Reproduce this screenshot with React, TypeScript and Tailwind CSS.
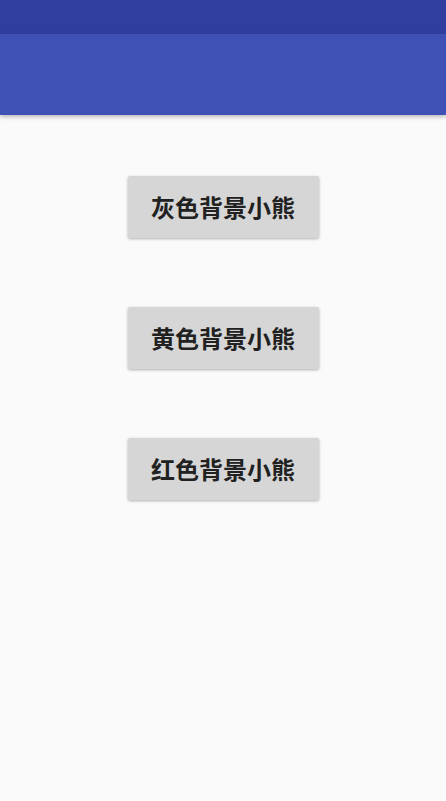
import React from "react";

const labels = ["灰色背景小熊", "黄色背景小熊", "红色背景小熊"];

export default function App() {
  return (
    <div
      className="w-[446px] h-[801px] bg-[#fafafa] flex flex-col overflow-hidden"
      style={{ fontFamily: '"Noto Sans CJK SC", Roboto, sans-serif' }}
    >
      <div className="h-[34px] bg-[#303f9f] shrink-0" />
      <div className="h-[81px] bg-[#3f51b5] shrink-0 shadow-[0_2px_4px_rgba(0,0,0,0.25)] relative z-10" />
      <div className="flex flex-col items-center pt-[61px] gap-[69px]">
        {labels.map((l) => (
          <button
            key={l}
            className="w-[191px] h-[62px] bg-[#d6d6d6] rounded-[2px] shadow-[0_1px_3px_rgba(0,0,0,0.3)] text-[24px] font-bold text-[#212121] leading-none flex items-center justify-center"
          >
            {l}
          </button>
        ))}
      </div>
    </div>
  );
}
